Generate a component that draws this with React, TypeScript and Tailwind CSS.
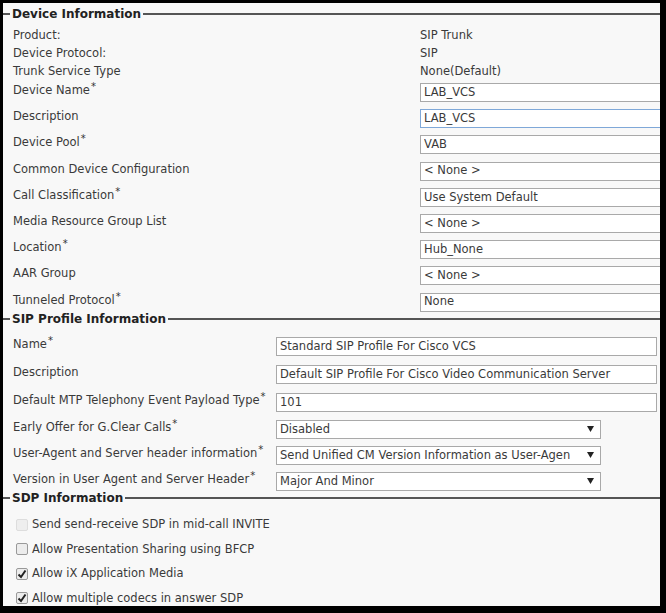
import React from "react";

const font = { fontFamily: '"DejaVu Sans", Verdana, sans-serif' };

function Legend({ title }: { title: string }) {
  return (
    <div className="flex items-center h-[16px]">
      <div className="w-[7px] h-[2px] bg-[#555]" />
      <span className="px-[2px] text-[12px] font-bold text-[#222] leading-none">{title}</span>
      <div className="flex-1 h-[2px] bg-[#555]" />
    </div>
  );
}

function Req() {
  return <span className="text-[10px] align-top relative top-[-3px] ml-[1px] text-[#333]">*</span>;
}

function StaticRow({ label, value }: { label: string; value: string }) {
  return (
    <div className="flex h-[18px] items-center">
      <div className="w-[417px] shrink-0 pl-[10px]">{label}</div>
      <div>{value}</div>
    </div>
  );
}

function Input({ value, focused, arrow, width }: { value: string; focused?: boolean; arrow?: boolean; width: string }) {
  return (
    <div
      className={`${width} shrink-0 h-[19px] bg-white border flex items-center pl-[3px] pr-[6px] overflow-hidden whitespace-nowrap ${
        focused ? "border-[#7fa8d8]" : "border-[#a9a9a9]"
      }`}
    >
      <span className="flex-1 overflow-hidden">{value}</span>
      {arrow && (
        <svg width="7" height="6" viewBox="0 0 7 6" className="shrink-0 ml-[4px]">
          <path d="M0 0 H7 L3.5 6 Z" fill="#222" />
        </svg>
      )}
    </div>
  );
}

function FieldRow({
  label,
  req,
  value,
  focused,
  arrow,
  labelW,
  width,
  h,
}: {
  label: string;
  req?: boolean;
  value: string;
  focused?: boolean;
  arrow?: boolean;
  labelW: string;
  width: string;
  h: string;
}) {
  return (
    <div className={`flex ${h} items-start pt-[2px]`}>
      <div className={`${labelW} shrink-0 pl-[10px] leading-[14px] whitespace-nowrap`}>
        {label}
        {req && <Req />}
      </div>
      <Input value={value} focused={focused} arrow={arrow} width={width} />
    </div>
  );
}

function Check({ label, checked, disabled }: { label: string; checked?: boolean; disabled?: boolean }) {
  return (
    <div className="flex items-center h-[24.5px] pl-[13px]">
      <div
        className={`w-[12px] h-[12px] rounded-[2px] border flex items-center justify-center ${
          disabled ? "border-[#ddd] bg-[#eee]" : "border-[#999] bg-[#ececec]"
        }`}
      >
        {checked && (
          <svg width="10" height="10" viewBox="0 0 10 10">
            <path d="M1.5 5.5 L4 8 L8.5 1.5" stroke="#222" strokeWidth="2" fill="none" />
          </svg>
        )}
      </div>
      <span className="ml-[4px]">{label}</span>
    </div>
  );
}

export default function App() {
  const sec1: { label: string; req?: boolean; value: string; focused?: boolean }[] = [
    { label: "Device Name", req: true, value: "LAB_VCS" },
    { label: "Description", value: "LAB_VCS", focused: true },
    { label: "Device Pool", req: true, value: "VAB" },
    { label: "Common Device Configuration", value: "< None >" },
    { label: "Call Classification", req: true, value: "Use System Default" },
    { label: "Media Resource Group List", value: "< None >" },
    { label: "Location", req: true, value: "Hub_None" },
    { label: "AAR Group", value: "< None >" },
    { label: "Tunneled Protocol", req: true, value: "None" },
  ];
  const sec2: { label: string; req?: boolean; value: string; arrow?: boolean; w: string; h: string }[] = [
    { label: "Name", req: true, value: "Standard SIP Profile For Cisco VCS", w: "w-[381px]", h: "h-[28px]" },
    { label: "Description", value: "Default SIP Profile For Cisco Video Communication Server", w: "w-[381px]", h: "h-[28px]" },
    { label: "Default MTP Telephony Event Payload Type", req: true, value: "101", w: "w-[381px]", h: "h-[27px]" },
    { label: "Early Offer for G.Clear Calls", req: true, value: "Disabled", arrow: true, w: "w-[325px]", h: "h-[26px]" },
    { label: "User-Agent and Server header information", req: true, value: "Send Unified CM Version Information as User-Agen", arrow: true, w: "w-[325px]", h: "h-[26px]" },
    { label: "Version in User Agent and Server Header", req: true, value: "Major And Minor", arrow: true, w: "w-[325px]", h: "h-[26px]" },
  ];
  return (
    <div className="w-[666px] h-[613px] bg-black pt-[3px] pl-[3px] pr-[6px] pb-[7px]">
      <div className="w-full h-full bg-[#f8f8f8] overflow-hidden text-[11.5px] text-[#3a3a3a] pt-[3px]" style={font}>
        <Legend title="Device Information" />
        <div className="pt-[5px]">
          <StaticRow label="Product:" value="SIP Trunk" />
          <StaticRow label="Device Protocol:" value="SIP" />
          <StaticRow label="Trunk Service Type" value="None(Default)" />
        </div>
        <div>
          {sec1.map((r) => (
            <FieldRow
              key={r.label}
              label={r.label}
              req={r.req}
              value={r.value}
              focused={r.focused}
              labelW="w-[417px]"
              width="w-[260px]"
              h="h-[26.2px]"
            />
          ))}
        </div>
        <div className="mt-[-6px]">
          <Legend title="SIP Profile Information" />
        </div>
        <div className="pt-[8px]">
          {sec2.map((r) => (
            <FieldRow
              key={r.label}
              label={r.label}
              req={r.req}
              value={r.value}
              arrow={r.arrow}
              labelW="w-[273px]"
              width={r.w}
              h={r.h}
            />
          ))}
        </div>
        <div className="mt-[-6px]">
          <Legend title="SDP Information" />
        </div>
        <div className="pt-[7px]">
          <Check label="Send send-receive SDP in mid-call INVITE" disabled />
          <Check label="Allow Presentation Sharing using BFCP" />
          <Check label="Allow iX Application Media" checked />
          <Check label="Allow multiple codecs in answer SDP" checked />
        </div>
      </div>
    </div>
  );
}
